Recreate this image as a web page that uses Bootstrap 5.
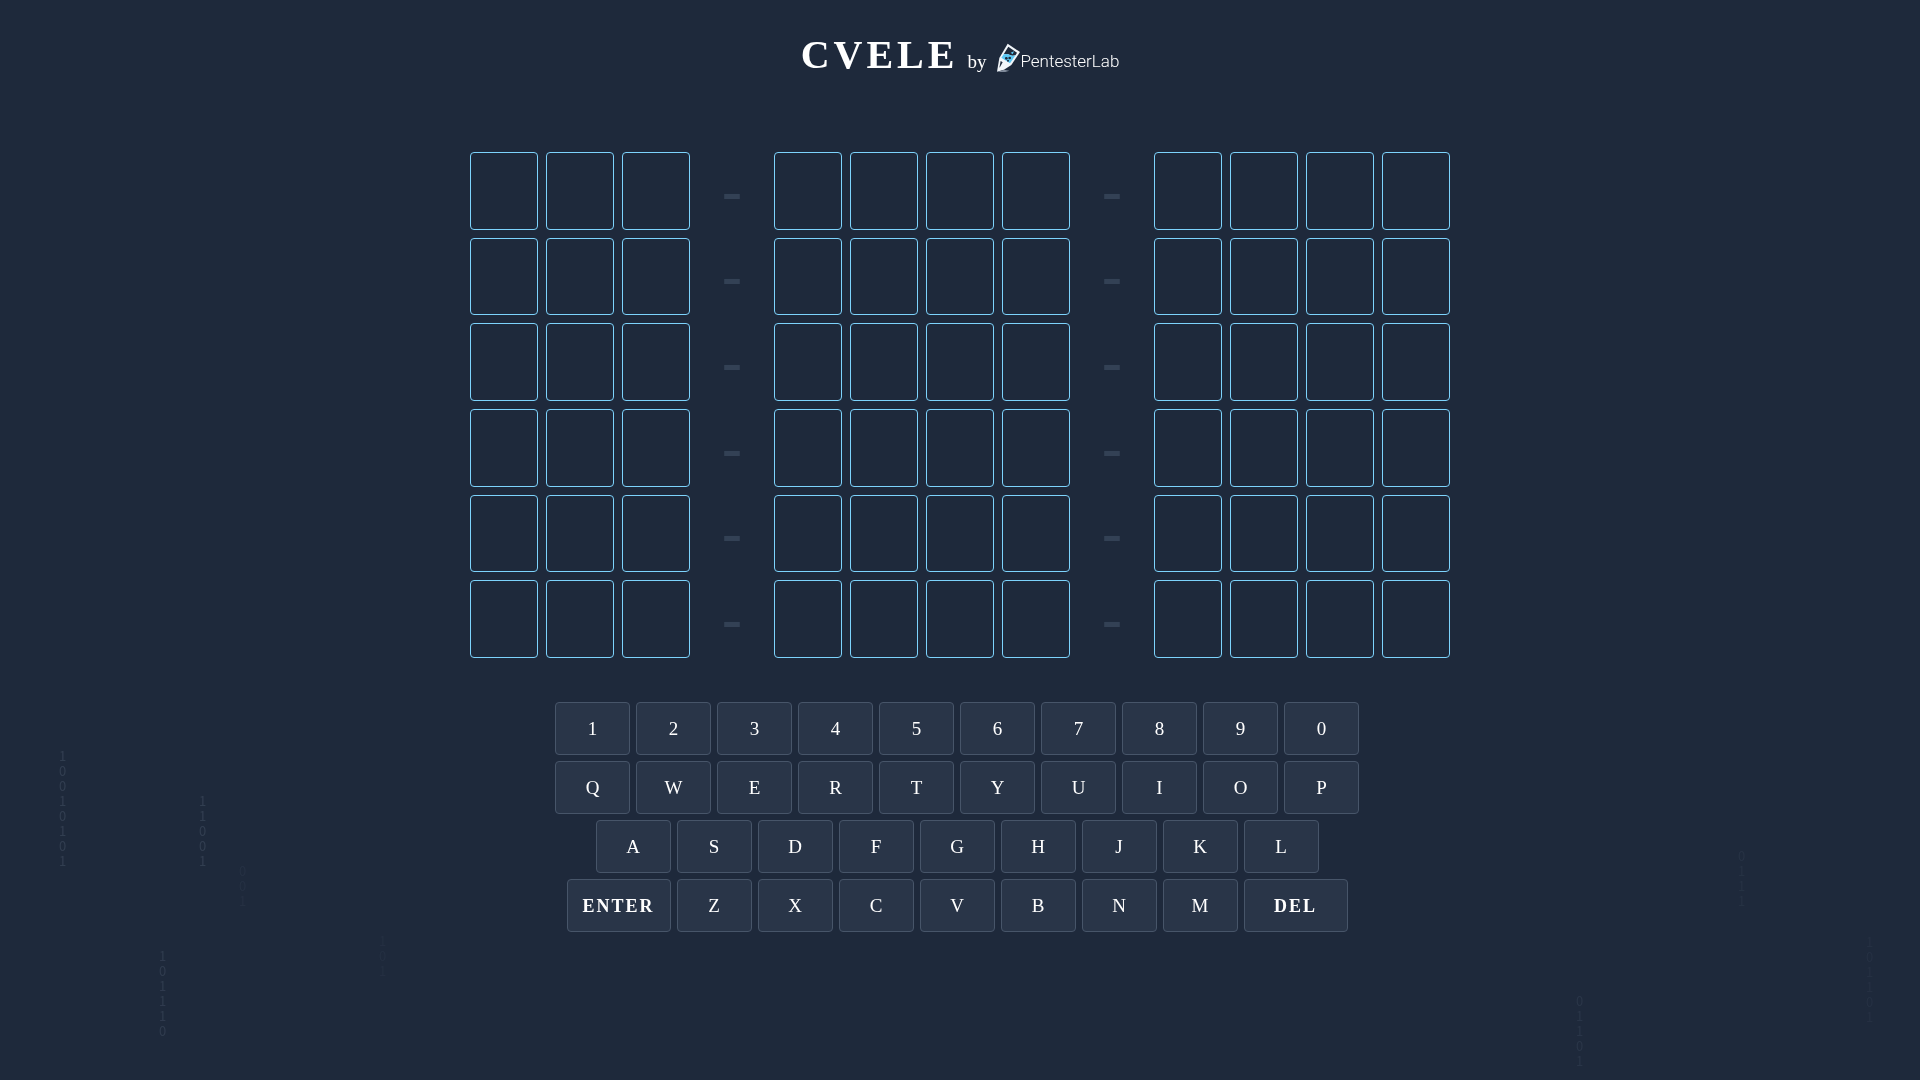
<!DOCTYPE html>
<html lang="en">
<head>
<meta charset="utf-8">
<meta name="viewport" content="width=device-width, initial-scale=1">
<title>CVELE by PentesterLab</title>
<link href="https://cdn.jsdelivr.net/npm/bootstrap@5.3.0/dist/css/bootstrap.min.css" rel="stylesheet">
<style>
  body {
    background: #1e293b;
    color: #fff;
    font-family: "Liberation Serif", "Times New Roman", serif;
  }
  .game { min-height: 100vh; overflow: hidden; }

  .game-title { font-size: 40px; line-height: 48px; letter-spacing: 4px; padding-top: 31px; margin-bottom: 73px; }
  .by-word { font-size: 19px; margin: 0 10px 0 9px; }
  .brand-link { color: #fff; font-family: Roboto, sans-serif; font-size: 17px; font-weight: 300; padding-top: 43px; }
  .brand-link svg { width: 24px; height: 30px; }
  .brand-link span { line-height: 20px; padding-top: 6px; }

  .board { max-width: 980px; margin-bottom: 44px; }
  .board-grid { display: grid; grid-template-rows: repeat(6, 1fr); gap: 8px; height: 506px; }
  .board-row { display: grid; grid-template-columns: repeat(13, 1fr); gap: 8px; }
  .tile { border: 1px solid #7dd3fc; border-radius: 4px; }
  .dash { color: #334155; font-size: 60px; line-height: 48px; font-weight: 700; padding-bottom: 2px; }

  .key {
    width: 75px; height: 53px; margin-right: 6px; padding: 0;
    background: #293548; border: 1px solid #475569; border-radius: 4px;
    color: #fff; font-size: 19px; line-height: 28px;
  }
  .key:hover { background: #334155; }
  .key-wide { width: 104px; font-size: 18px; font-weight: 700; letter-spacing: 2px; }
  .key-row { margin-bottom: 6px; }

  /* falling binary digits behind the game */
  .rain { inset: 0; z-index: -1; overflow: hidden; }
  .drop { width: 7px; color: #94a3b8; font-family: "Noto Sans CJK SC", sans-serif; font-size: 13px; line-height: 15px; word-break: break-all; }
</style>
</head>
<body>
<div class="rain position-fixed" aria-hidden="true" id="rain"></div>

<main class="game">
  <header class="d-flex justify-content-center align-items-baseline">
    <h1 class="game-title fw-bold">CVELE</h1>
    <span class="by-word">by</span>
    <a class="brand-link text-decoration-none d-flex align-items-center align-self-start" href="#">
      <svg viewBox="0 0 72 90" aria-hidden="true">
        <path d="M35 2 L72 27 L46 66 L24 80 L3 86 L10 45 Z" fill="#f1f5f9"/>
        <path d="M37 11 L63 29 L59 36 Q50 40 42 36 Q34 31 23 34 Z" fill="#1e293b"/>
        <path d="M23 34 Q34 31 42 36 Q50 40 59 36 L42 61 L16 44 Z" fill="#5cc8f5"/>
        <path d="M44 29 L54 25 L50 34 Z" fill="#5cc8f5"/>
        <circle cx="31" cy="46" r="4" fill="#1e293b"/><circle cx="41" cy="45" r="4" fill="#1e293b"/><circle cx="36" cy="53" r="3" fill="#1e293b"/>
        <path d="M14 54 L20 58 L12 72 L10 74 Z" fill="#1e293b"/>
        <path d="M24 80 L40 83 L28 87 L4 87 Z" fill="#7f8a9a"/>
      </svg>
      <span>PentesterLab</span>
    </a>
  </header>

  <section class="board mx-auto" aria-label="Guesses">
    <div class="board-grid" id="board"></div>
  </section>

  <section aria-label="Keyboard" id="keyboard"></section>
</main>

<script src="https://cdn.jsdelivr.net/npm/bootstrap@5.3.0/dist/js/bootstrap.bundle.min.js"></script>
<script>
  const tile = '<div class="tile"></div>';
  const dash = '<div class="dash d-flex align-items-center justify-content-center">-</div>';
  document.getElementById('board').innerHTML =
    ('<div class="board-row">' + [3, 4, 4].map(n => tile.repeat(n)).join(dash) + '</div>').repeat(6);

  const rows = ['1234567890'.split(''), 'QWERTYUIOP'.split(''), 'ASDFGHJKL'.split(''), ['ENTER', ...'ZXCVBNM', 'DEL']];
  document.getElementById('keyboard').innerHTML = rows.map(keys =>
    '<div class="key-row d-flex justify-content-center">' +
    keys.map(k => `<button type="button" class="key${k.length > 1 ? ' key-wide' : ''}">${k}</button>`).join('') +
    '</div>').join('');

  const drops = [
    [59, 748, '10010101', .17], [199, 793, '11001', .17], [239, 863, '001', .06],
    [159, 948, '101110', .15], [379, 933, '101', .05], [1576, 993, '01101', .10],
    [1738, 848, '0111', .07], [1866, 934, '101101', .06]
  ];
  document.getElementById('rain').innerHTML = drops.map(([x, y, bits, o]) =>
    `<div class="drop position-absolute" style="left:${x}px;top:${y}px;opacity:${o}">${bits}</div>`).join('');
</script>
</body>
</html>
